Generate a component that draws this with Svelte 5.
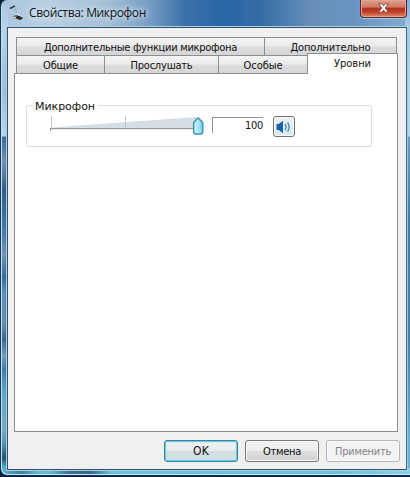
<script>
  const upper = [
    { label: 'Дополнительные функции микрофона', width: 248, text: 193 },
    { label: 'Дополнительно', width: 133, text: 80 }
  ];
  const lower = [
    { label: 'Общие', width: 88, text: 35 },
    { label: 'Прослушать', width: 114, text: 62 },
    { label: 'Особые', width: 89, text: 39 },
    { label: 'Уровни', width: 91, text: 37, active: true }
  ];

  // Spreads the label over a set width by adjusting its tracking.
  function fit(node, width) {
    const natural = node.getBoundingClientRect().width;
    const spacing = (width - natural) / node.textContent.length;
    node.style.letterSpacing = `${spacing}px`;
  }
</script>

<div class="window">
  <header>
    <svg class="mic" width="16" height="18" viewBox="0 0 16 18">
      <path d="M1 4.500 6 2" stroke="#34383a" stroke-width="1.800" />
      <path d="m5 3 5 10" stroke="#a5b1ba" stroke-width="1.2" />
      <path d="m3 13 3-2 4 1 4 2-2 2-5-1-4-1z" fill="#73818a" />
      <path d="m8 11 6 3-3 2-4-2z" fill="#24282b" />
      <path d="m8 9 2 3" stroke="#fff" />
      <path d="m3 13 4 1" stroke="#d6dde0" />
    </svg>
    <span class="title"><span use:fit={117}>Свойства: Микрофон</span></span>
    <button class="close" aria-label="Закрыть">
      <svg width="11" height="10" viewBox="0 0 11 10">
        <path d="M.7.8h3.1l1.7 2L7.200.8h3.100L7.300 5l3 4.200H7.200L5.500 7.200 3.800 9.200H.7l3-4.200z" fill="#fff" stroke="#6f4540" stroke-width=".9" />
      </svg>
    </button>
  </header>

  <main>
    <div class="row upper">
      {#each upper as tab}
        <div class="tab" style:width="{tab.width}px"><span use:fit={tab.text}>{tab.label}</span></div>
      {/each}
    </div>
    <div class="row lower">
      {#each lower as tab}
        <div class="tab" class:active={tab.active} style:width="{tab.width}px"><span use:fit={tab.text}>{tab.label}</span></div>
      {/each}
    </div>
    <section class="panel">
      <div class="group">
        <div class="legend"><span use:fit={60}>Микрофон</span></div>
        <svg class="slider" width="156" height="24" viewBox="0 0 156 24">
          <defs>
            <linearGradient id="thumb" x2="1" y2="0">
              <stop offset="0" stop-color="#d9f6fc" />
              <stop offset=".5" stop-color="#a9e6f5" />
              <stop offset="1" stop-color="#72d0eb" />
            </linearGradient>
          </defs>
          <path d="M2 13.500 148 3v11H2z" fill="#d5dee4" />
          <path d="M2.500 2v12M76.500 2v12" stroke="#c3cacb" />
          <path d="M1 15.500h147" stroke="#e9eeee" />
          <path d="M1 14.500h147M1.500 14v3" stroke="#949b99" />
          <path d="M144.700 8.500 148.700 4.200h1L153.700 8.500v10.300l-1.200 1.200h-6.600L144.700 18.800z" fill="url(#thumb)" stroke="#3f93aa" stroke-width="1.500" />
        </svg>
        <div class="value"><span use:fit={18}>100</span></div>
        <button class="sound" aria-label="Звук">
          <svg width="16" height="14" viewBox="0 0 16 14">
            <path d="M.5 4h2.200L7 .7v12.600L2.700 10H.5z" fill="#1761ad" />
            <path d="M9 4q2.200 3 0 6M11.500 2.500q3.500 4.500 0 9" fill="none" stroke="#3c86ba" stroke-width="1.300" />
          </svg>
        </button>
      </div>
    </section>
    <footer>
      <button class="push ok"><span use:fit={16}>OK</span></button>
      <button class="push"><span use:fit={38}>Отмена</span></button>
      <button class="push" disabled><span use:fit={56}>Применить</span></button>
    </footer>
  </main>
</div>

<style>
  :global(body) { margin: 0; background: #07213c; overflow: hidden; }
  * { box-sizing: border-box; }
  button { margin: 0; padding: 0; font: inherit; }
  .window {
    width: 410px;
    height: 476px;
    padding: 0 3px 6px 6px;
    border: 1px solid #17344d;
    border-top: 0;
    border-right: 0;
    border-radius: 7px 0 0 7px;
    box-shadow: inset 1px -1px 0 #b9e8f6;
    background:
      linear-gradient(90deg, #5eb5d4, #477b98 5%, #69b7d5 9%, #68b6d2 12%, #3b6c8c 17%, #3a6986 22%, #6fc0dd 27%, #71bfdc 82%, #8ed0e6) 0 100% / 100% 7px no-repeat,
      linear-gradient(#87afd0 0, #a6c9e4 28px, #bad5eb 100px, #b9d4e9 136px, #6b9dc5 137px, #447ba8 220px, #477fab 340px, #65b4d7 440px) 100% 0 / 5px 100% no-repeat,
      linear-gradient(#a7c3de 0, #bad4eb 28px, #9ebbd9 90px, #b8d3e9 136px, #3d6898 137px, #7390b5 162px, #355b87 190px, #3e76aa 225px, #7290b3 255px, #376c9f 277px, #5c91bd 295px, #698ba5 325px, #3c678e 339px, #7099bb 355px, #3e7dac 370px, #61a8cd 395px, #76aabd 430px, #4f91af 445px, #24516c 458px, #57a6c5 467px) 0 0 / 7px 100% no-repeat,
      linear-gradient(90deg, #aac6df 0, #b9cfe2 12%, #a4bfd7 26%, #799fc5 36%, #3c70aa 45%, #2866a5 55%, #386da6 64%, #6790b9 76%, #6795c0 86%, #84acd0 100%);
    font-family: "DejaVu Sans Condensed", "DejaVu Sans", "Noto Sans", sans-serif;
    font-size: 11px;
    color: #111;
  }
  header { display: flex; height: 27px; }
  .mic { margin: 4px 0 0 2px; fill: none; }
  .title {
    flex: 1;
    padding: 5px 0 0 4px;
    font: 12px/16px "Open Sans", "Noto Sans", sans-serif;
    color: #0d1318;
    text-shadow: 0 0 7px #e1edf5, 0 0 5px #d5e4ef;
    white-space: nowrap;
  }
  .title span { display: inline-block; }
  .close {
    display: flex;
    align-items: center;
    justify-content: center;
    width: 47px;
    height: 18px;
    border: 1px solid #4c2831;
    border-top: 0;
    border-radius: 0 0 4px 4px;
    box-shadow: inset 0 0 0 1px #e7a499, 0 1px 0 #a9cadf;
    background: linear-gradient(#df9d8a 0, #cf7964 43%, #b33420 46%, #bc3c27 68%, #e3876c);
  }
  .close svg { margin-top: -2px; }
  main {
    width: 400px;
    height: 443px;
    padding: 9px 8px 0 6px;
    border: 1px solid #31536b;
    border-right-color: #31688e;
    box-shadow: 0 0 0 1px #a8cfe4;
    background: #f0f0f0;
  }
  .row { display: flex; height: 18px; padding-left: 2px; }
  .row span { display: inline-block; }
  .tab {
    flex: none;
    height: 18px;
    border: 1px solid #8b8e92;
    border-right-width: 0;
    border-bottom: 0;
    background: linear-gradient(#f4f4f4, #ebebeb 48%, #dedede 52%, #d5d5d5);
    line-height: 19px;
    text-align: center;
    white-space: nowrap;
  }
  .upper .tab:last-child { border-right-width: 1px; }
  .lower .tab.active {
    position: relative;
    z-index: 1;
    height: 21px;
    margin-top: -2px;
    border-right-width: 1px;
    background: #fff;
    line-height: 20px;
  }
  .panel { width: 384px; height: 359px; padding: 31px 0 0 11px; border: 1px solid #8b8e92; background: #fff; }
  .group { display: flex; align-items: flex-start; width: 346px; height: 42px; border: 1px solid #d5dfe1; border-radius: 3px; }
  .legend { width: 65px; height: 14px; margin: -6px -43px 0 6px; padding-left: 2px; background: #fff; font-family: "DejaVu Sans", sans-serif; line-height: 14px; white-space: nowrap; }
  .legend span, .value span { display: inline-block; }
  .slider { position: relative; margin: 8px 0 0 -6px; }
  .value { width: 51px; height: 16px; margin: 11px 0 0 7px; border-top: 1px solid #929292; border-left: 1px solid #929292; line-height: 15px; text-align: right; }
  .sound { display: flex; align-items: center; justify-content: center; width: 22px; height: 21px; margin: 10px 0 0 10px; border: 1px solid #77706f; border-radius: 3px; box-shadow: inset 0 0 0 1px #f8fcff; background: linear-gradient(#eef4f7, #d8e8f0); }
  footer { display: flex; justify-content: flex-end; gap: 7px; width: 386px; padding-top: 8px; }
  .push { width: 74px; height: 22px; border: 1px solid #777; border-radius: 3px; box-shadow: inset 0 0 0 1px #fafafa; background: linear-gradient(#f3f3f3, #ececec 48%, #dedede 52%, #d1d1d1); line-height: 19px; color: #111; white-space: nowrap; }
  .push span { display: inline-block; }
  .push.ok { border-color: #3d819d; box-shadow: inset 0 0 0 1px #68cce9, inset 0 0 2px 1px #a8e3f2; background: linear-gradient(#f2f4f4, #e6ecee 48%, #d7dcdd 52%, #cee4ea); font-size: 12px; }
  .push:disabled { border-color: #b2b6b8; background: #f3f3f3; color: #858585; }
</style>
